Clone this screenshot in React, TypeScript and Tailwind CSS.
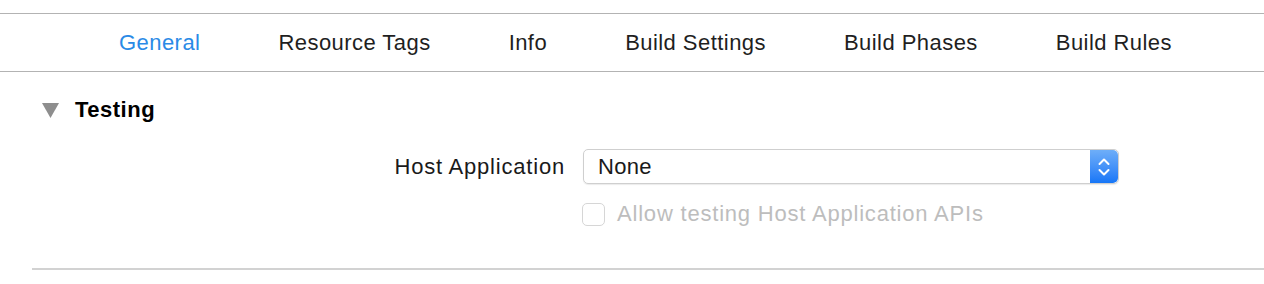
import React from "react";

const tabs = ["General", "Resource Tags", "Info", "Build Settings", "Build Phases", "Build Rules"];

function Disclosure() {
    return (
        <svg width="17" height="15" viewBox="0 0 17 15" className="shrink-0">
            <polygon points="0,0 17,0 8.5,15" fill="#8e8e8e" />
        </svg>
    );
}

function Stepper() {
    return (
        <div className="w-[28px] h-full flex items-center justify-center rounded-r-[5px] bg-gradient-to-b from-[#6eaef8] to-[#1576f7]">
            <svg width="12" height="20" viewBox="0 0 12 20" fill="none" stroke="white" strokeWidth="2" strokeLinecap="round" strokeLinejoin="round">
                <polyline points="1.5,7 6,2.5 10.5,7" />
                <polyline points="1.5,13 6,17.5 10.5,13" />
            </svg>
        </div>
    );
}

export default function App() {
    return (
        <div
            className="w-[1264px] h-[284px] bg-white pt-[13px] text-[22px] leading-[28px] text-[#1a1a1a]"
            style={{ fontFamily: '"Liberation Sans", Arial, sans-serif' }}
        >
            <div className="h-[59px] border-y border-[#b3b3b3] flex items-center pl-[119px] gap-[78px] tracking-[0.45px]">
                {tabs.map((t, i) => (
                    <span key={t} className={i === 0 ? "text-[#2a8ae6]" : "text-[#1f1f1f]"}>
                        {t}
                    </span>
                ))}
            </div>

            <div className="flex items-center gap-[16px] pl-[42px] mt-[24px] h-[28px]">
                <Disclosure />
                <span className="font-bold text-black tracking-[0.5px]">Testing</span>
            </div>

            <div className="flex items-center mt-[25px] tracking-[0.8px]">
                <div className="w-[565px] text-right">Host Application</div>
                <div className="ml-[18px] w-[536px] h-[35px] flex rounded-[5px] border border-[#cfcfcf] shadow-[0_1px_1px_rgba(0,0,0,0.08)] overflow-hidden">
                    <div className="flex-1 flex items-center pl-[14px] tracking-[0.3px]">None</div>
                    <Stepper />
                </div>
            </div>

            <div className="flex items-center mt-[16px] pl-[582px] gap-[12px] tracking-[0.8px]">
                <div className="w-[23px] h-[23px] rounded-[5px] border border-[#d6d6d6] bg-white" />
                <span className="text-[#bdbdbd]">Allow testing Host Application APIs</span>
            </div>

            <div className="ml-[32px] mt-[40px] h-[2px] bg-[#d2d2d2]" />
        </div>
    );
}
